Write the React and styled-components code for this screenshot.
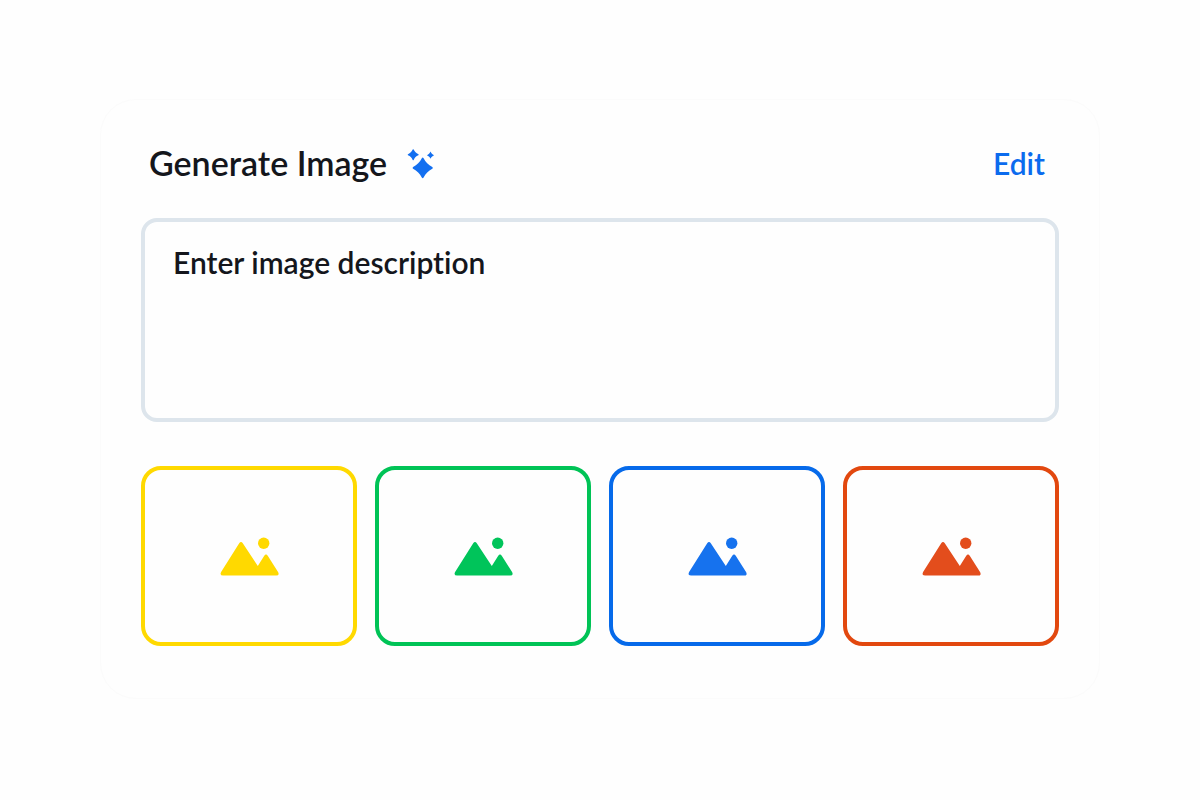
import React from 'react';
import styled, { createGlobalStyle } from 'styled-components';

const GlobalStyle = createGlobalStyle`
  * {
    box-sizing: border-box;
  }

  body {
    margin: 0;
    background: #fefefe;
    color: #14161c;
    font-family: 'Lato', 'Liberation Sans', sans-serif;
    font-variant-ligatures: none;
  }
`;

const Page = styled.main`
  padding: 99px 100px;
`;

const Card = styled.section`
  padding: 40px;
  padding-bottom: 52px;
  border: 1px solid #fbfbfb;
  border-radius: 36px;
  background: #fefefe;
`;

const Header = styled.header`
  display: flex;
  align-items: center;
  justify-content: space-between;
  height: 46px;
  padding: 0 14px 0 8px;
`;

const Title = styled.h1`
  display: flex;
  align-items: center;
  gap: 18px;
  margin: 0;
  font-size: 34px;
  font-weight: 600;
  line-height: 40px;
`;

const EditButton = styled.button`
  padding: 0;
  border: none;
  background: none;
  color: #0b6bee;
  font-family: inherit;
  font-size: 30px;
  font-weight: 600;
  line-height: 40px;
  cursor: pointer;
`;

const Description = styled.textarea`
  display: block;
  width: 100%;
  height: 204px;
  margin: 32px 0 44px;
  padding: 20px 28px;
  border: 4px solid #dde5ec;
  border-radius: 16px;
  outline: none;
  background: #fefefe;
  color: inherit;
  font-family: inherit;
  font-size: 30px;
  font-weight: 600;
  font-variant-ligatures: none;
  line-height: 40px;
  resize: none;

  &::placeholder {
    color: inherit;
    opacity: 1;
  }
`;

const Tiles = styled.div`
  display: grid;
  grid-template-columns: repeat(4, 1fr);
  gap: 18px;
`;

const Tile = styled.button`
  display: flex;
  align-items: center;
  justify-content: center;
  height: 180px;
  padding: 0;
  border: 4px solid ${(props) => props.$border};
  border-radius: 20px;
  background: #fefefe;
  color: ${(props) => props.$fill};
  cursor: pointer;
`;

const tiles = [
  { id: 1, name: 'Yellow image', border: '#ffd900', fill: '#ffd900' },
  { id: 2, name: 'Green image', border: '#00c356', fill: '#00c45a' },
  { id: 3, name: 'Blue image', border: '#066aea', fill: '#1672ee' },
  { id: 4, name: 'Orange image', border: '#e2480f', fill: '#e34d1c' },
];

const SparkleIcon = () => (
  <svg width="30" height="32" viewBox="-1 -2 30 32" fill="#136ff0" aria-hidden="true">
    <path d="M15.8 9.2Q16.7 8 17.6 9.2C19.6 13.2 22.3 15.9 26.3 18Q27.5 18.9 26.3 19.8C22.3 21.9 19.6 24.6 17.6 28.6Q16.7 29.8 15.8 28.6C13.8 24.6 11.1 21.9 7.1 19.8Q5.9 18.9 7.1 18C11.1 15.9 13.8 13.2 15.8 9.2Z" />
    <path d="M6.7 0.6Q7.2 -0.1 7.7 0.6C8.8 3 10 4.2 12.4 5.3Q13.1 5.8 12.4 6.3C10 7.4 8.8 8.6 7.7 11Q7.2 11.7 6.7 11C5.6 8.6 4.4 7.4 2 6.3Q1.3 5.8 2 5.3C4.4 4.2 5.6 3 6.7 0.6Z" />
    <path d="M24.5 2.6C25.4 4.5 26.2 5.3 28.1 6.2C26.2 7.1 25.4 7.9 24.5 9.8C23.6 7.9 22.8 7.1 20.9 6.2C22.8 5.3 23.6 4.5 24.5 2.6Z" />
  </svg>
);

const ImageIcon = () => (
  <svg width="62" height="42" viewBox="-2 -2 62 42" fill="currentColor" aria-hidden="true">
    <path d="M19.2 6.2Q21 3.6 22.8 6.2L37.8 28.9L44.1 18.9Q46 16.3 47.9 18.9L58.2 35.2Q59.7 38.6 56.2 38.6H3.2Q-0.6 38.6 1.1 35.1Z" />
    <circle cx="43.7" cy="6.3" r="5.7" />
  </svg>
);

const App = () => {
  return (
    <>
      <GlobalStyle />
      <Page>
        <Card>
          <Header>
            <Title>
              <label htmlFor="description">Generate Image</label>
              <SparkleIcon />
            </Title>
            <EditButton type="button">Edit</EditButton>
          </Header>
          <Description id="description" placeholder="Enter image description" />
          <Tiles>
            {tiles.map((tile) => (
              <Tile
                key={tile.id}
                type="button"
                aria-label={tile.name}
                $border={tile.border}
                $fill={tile.fill}
              >
                <ImageIcon />
              </Tile>
            ))}
          </Tiles>
        </Card>
      </Page>
    </>
  );
};

export default App;
